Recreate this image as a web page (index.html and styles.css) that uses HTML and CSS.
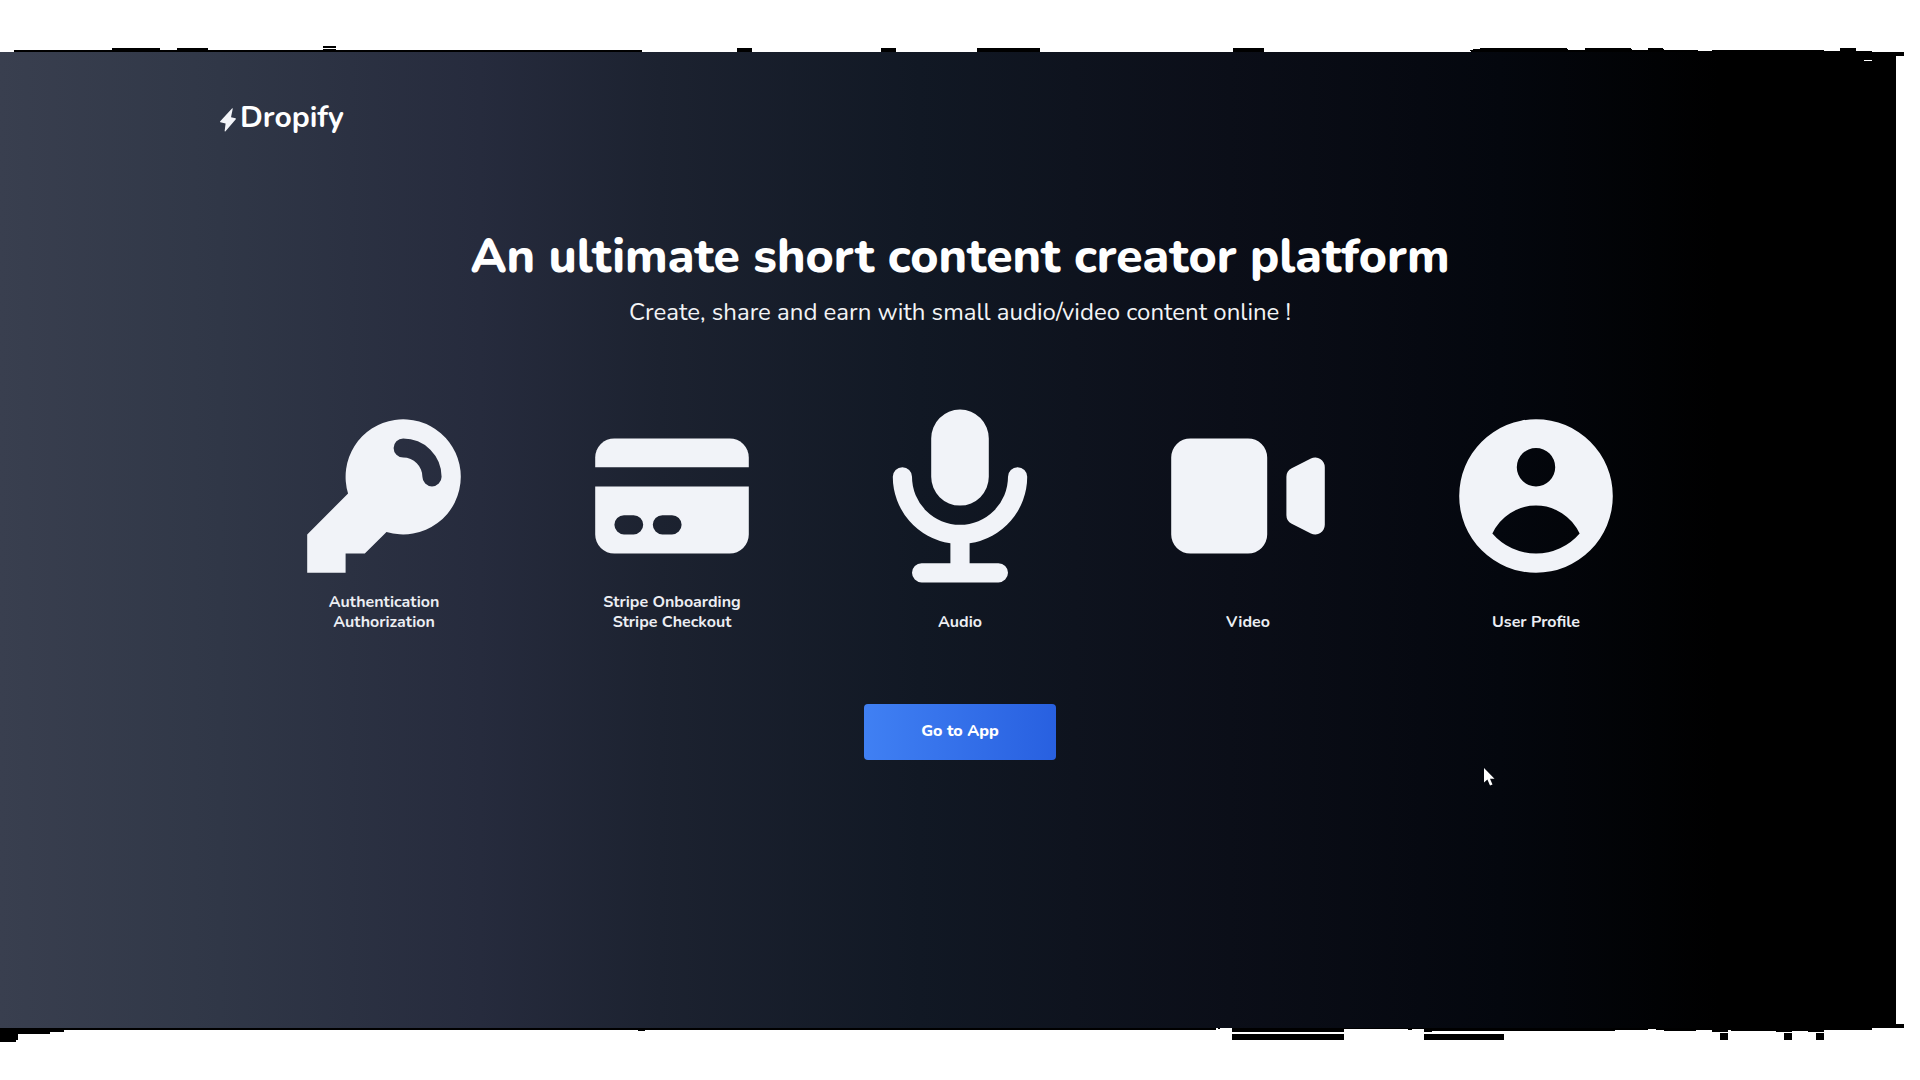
FILE: index.html
```html
<!DOCTYPE html>
<html lang="en">
<head>
<meta charset="utf-8">
<title>Dropify</title>
<link rel="stylesheet" href="styles.css">
</head>
<body>
<svg class="edge" viewBox="0 0 1920 52" shape-rendering="crispEdges" aria-hidden="true">
  <path d="M14 50H642V52H14zM112 48H160V50H112zM177 48H208V50H177zM323 46H336V48H323zM323 49H336V50H323zM737 48H752V52H737zM881 48H896V52H881zM977 48H1040V52H977zM1233 48H1264V52H1233zM1470 50H1473V49H1480V48H1567V49H1568V50H1585V48H1631V49H1632V50H1648V48H1663V49H1664V50H1698V51H1712V50H1824V51H1840V48H1856V51H1872V52H1471V51H1470z"/>
</svg>
<main class="stage">
  <header class="brand">
    <svg class="bolt" viewBox="0 0 16 24" aria-hidden="true"><path d="M12.2.2L0 13.4L.3 14.2L5.6 15.4L4.6 23.2L5.3 23.4L16 11L15.6 10.2L11 9.2L12.8.4z"/></svg>
    <span class="brand-name">Dropify</span>
  </header>
  <section class="hero">
    <h1 class="title">An ultimate short content creator platform</h1>
    <p class="subtitle">Create, share and earn with small audio/video content online !</p>
  </section>
  <section class="features">
    <div class="feature">
      <svg class="icon" viewBox="0 0 20 20"><path fill-rule="evenodd" d="M18 8a6 6 0 01-7.743 5.743L10 14l-1 1-1 1H6v2H2v-4l4.257-4.257A6 6 0 1118 8zm-6-4a1 1 0 100 2 2 2 0 012 2 1 1 0 102 0 4 4 0 00-4-4z"/></svg>
      <p class="label">Authentication<br>Authorization</p>
    </div>
    <div class="feature">
      <svg class="icon" viewBox="0 0 20 20"><path d="M4 4a2 2 0 00-2 2v1h16V6a2 2 0 00-2-2H4z"/><path fill-rule="evenodd" d="M18 9H2v5a2 2 0 002 2h12a2 2 0 002-2V9zM4 13a1 1 0 011-1h1a1 1 0 110 2H5a1 1 0 01-1-1zm5-1a1 1 0 100 2h1a1 1 0 100-2H9z"/></svg>
      <p class="label">Stripe Onboarding<br>Stripe Checkout</p>
    </div>
    <div class="feature">
      <svg class="icon" viewBox="0 0 20 20"><path fill-rule="evenodd" d="M7 4a3 3 0 016 0v4a3 3 0 11-6 0V4zm4 10.93A7.001 7.001 0 0017 8a1 1 0 10-2 0A5 5 0 015 8a1 1 0 00-2 0 7.001 7.001 0 006 6.93V17H6a1 1 0 100 2h8a1 1 0 100-2h-3v-2.07z"/></svg>
      <p class="label">Audio</p>
    </div>
    <div class="feature">
      <svg class="icon" viewBox="0 0 20 20"><path d="M2 6a2 2 0 012-2h6a2 2 0 012 2v8a2 2 0 01-2 2H4a2 2 0 01-2-2V6zM14.553 7.106A1 1 0 0014 8v4a1 1 0 00.553.894l2 1A1 1 0 0018 13V7a1 1 0 00-1.447-.894l-2 1z"/></svg>
      <p class="label">Video</p>
    </div>
    <div class="feature">
      <svg class="icon" viewBox="0 0 20 20"><path fill-rule="evenodd" d="M18 10a8 8 0 11-16 0 8 8 0 0116 0zm-6-3a2 2 0 11-4 0 2 2 0 014 0zm-2 4a5 5 0 00-4.546 2.916A5.986 5.986 0 0010 16a5.986 5.986 0 004.546-2.084A5 5 0 0010 11z"/></svg>
      <p class="label">User Profile</p>
    </div>
  </section>
  <button class="cta" type="button">Go to App</button>
</main>
<svg class="edge" viewBox="0 1028 1920 52" shape-rendering="crispEdges" aria-hidden="true">
  <path d="M0 1028H1872V1030H1824V1032H1808V1031H1792V1032H1776V1031H1731V1030H1728V1032H1712V1030H1696V1031H1664V1030H1656V1029H1648V1030H1615V1031H1432V1032H1424V1029H1412V1030H1408V1029H1344V1032H1232V1028H1220V1029H1218V1028H1216V1030H645V1031H638V1030H64V1032H50V1034H18V1040H16V1042H0zM1232 1034H1344V1040H1232zM1424 1034H1504V1040H1424zM1720 1033H1728V1040H1720zM1784 1033H1792V1040H1784zM1816 1033H1824V1040H1816z"/>
</svg>
<svg class="corners" viewBox="1864 52 40 976" shape-rendering="crispEdges" aria-hidden="true">
  <path d="M1896 52H1904V56H1896zM1896 1024H1904V1028H1896z"/><path class="speck" d="M1864 60H1872V61H1864z"/>
</svg>
<svg class="cursor" viewBox="0 0 12 19" aria-hidden="true"><path d="M0 0V14.5L3.4 11.6L6 17.5L8.5 16.4L6 10.7H10.5z"/></svg>
</body>
</html>
```
FILE: styles.css
```css
* { box-sizing: border-box; }

body {
  margin: 0;
  width: 1920px;
  height: 1080px;
  overflow: hidden;
  position: relative;
  background: #fff;
  color: #fff;
  font-family: Nunito, Lato, "Noto Sans", sans-serif;
}

.edge { display: block; width: 1920px; height: 52px; fill: #000; }

.stage {
  width: 1896px;
  height: 976px;
  display: flex;
  flex-direction: column;
  background: linear-gradient(90deg, #393f4f 0, #303747 220px, #262b3d 480px, #1c2230 660px, #111824 920px, #0b0e18 1230px, #04070e 1500px, #000 1720px);
}

.brand { display: flex; align-items: center; height: 40px; margin: 46px 0 0 220px; }
.bolt { width: 16px; height: 24px; margin-top: 3px; fill: #f3f4f8; }
.brand-name { margin-left: 4px; font-size: 30px; font-weight: 700; line-height: 40px; }

.hero { width: 1920px; padding-top: 94px; text-align: center; }
.title { margin: 0; font-size: 48px; font-weight: 800; line-height: 48px; }
.subtitle { margin: 16px 0 0; font-size: 24px; line-height: 32px; color: #f3f4f6; }

.features { display: grid; grid-template-columns: repeat(5, 288px); margin: 72px 0 0 240px; height: 232px; }
.feature { display: flex; flex-direction: column; align-items: center; justify-content: space-between; }
.icon { width: 192px; height: 192px; fill: #f1f3f8; }
.label { margin: 0; font-size: 16px; font-weight: 700; line-height: 20px; text-align: center; color: #eceef3; }

.cta {
  width: 192px;
  height: 56px;
  margin: 72px 0 0 864px;
  padding: 0 0 1px;
  border: 0;
  border-radius: 4px;
  color: #fff;
  font: 800 16px/55px Nunito, Lato, "Noto Sans", sans-serif;
  background: linear-gradient(90deg, #4080f3, #2860e0);
}

.corners { position: absolute; left: 1864px; top: 52px; width: 40px; height: 976px; fill: #000; }
.corners .speck { fill: #fff; }
.cursor { position: absolute; left: 1484px; top: 768px; width: 12px; height: 19px; fill: #fff; }
```
